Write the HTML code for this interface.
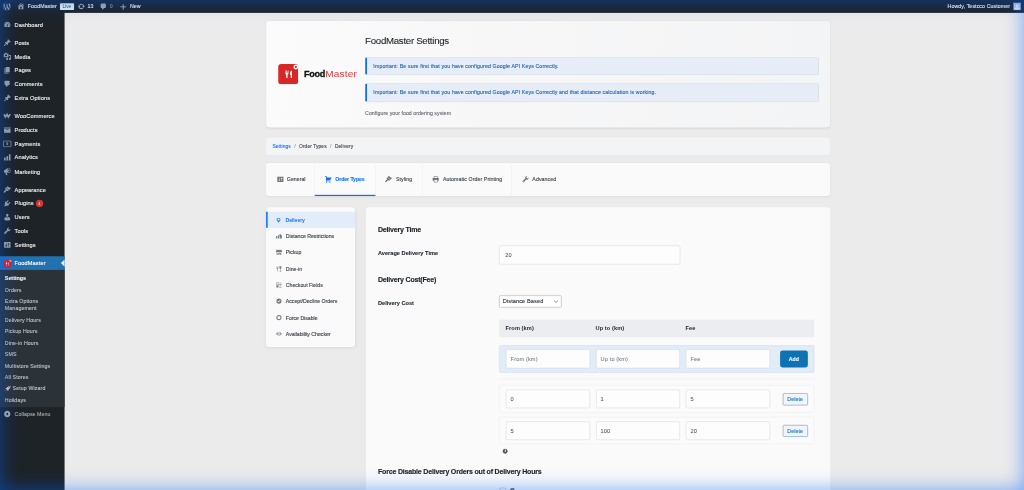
<!DOCTYPE html>
<html lang="en">
<head>
<meta charset="utf-8">
<title>FoodMaster Settings</title>
<style>
*{box-sizing:border-box;margin:0;padding:0}
html,body{width:1024px;height:490px;overflow:hidden;background:#ebebeb}
body{font-family:"Liberation Sans",sans-serif;font-size:13px;line-height:1.4;color:#3c434a;-webkit-text-stroke:.25px}
#vp{position:relative;width:1024px;height:490px;overflow:hidden}
#page{position:absolute;left:0;top:0;width:2544px;height:1218px;transform:scale(0.40252);transform-origin:0 0;background:#ebebeb}
#ss{position:absolute;left:0;top:0;width:1024px;height:490px;overflow:hidden;transform:rotate(0.0001deg);transform-origin:0 0}
#glow{position:absolute;left:0;top:0;width:1024px;height:490px;pointer-events:none;box-shadow:inset 0 0 19px 0 rgba(0,98,255,.53)}
svg{display:block}

/* admin bar */
#bar{-webkit-text-stroke:.3px;z-index:2;position:absolute;left:0;top:0;width:2544px;height:32px;background:#1d2327;color:#f0f0f1;font-size:13px;line-height:32px;white-space:nowrap}
#bar .it{position:absolute;top:0;height:32px}
#bar svg{position:absolute;fill:#a7aaad}
#bar .live{position:absolute;left:148.5px;top:7.5px;width:35px;height:17.5px;background:#e4eff3;color:#1c5a2c;-webkit-text-stroke:0;font-size:12px;line-height:17.5px;text-align:center;border-radius:2px}
#bar .av{position:absolute;left:2518px;top:7px;width:18px;height:18px;background:#c6d2dd;border:1px solid #8c8f94;overflow:hidden}

/* admin menu */
#menu{position:absolute;left:0;top:0;width:160px;height:1218px;background:#1d2327;padding-top:43.700px;transform:scale(1.0025);transform-origin:0 0}
#menu .m{-webkit-text-stroke:.3px;position:relative;height:34.2px;color:#f0f0f1;font-size:14px;line-height:18.2px;padding:8px 8px 8px 36px;white-space:nowrap;letter-spacing:.25px}
#menu .m svg{position:absolute;left:8px;top:7px;width:20px;height:20px;fill:#9ea3a8}
#menu .sep{height:5px;margin-bottom:6px}
#menu .cur{background:#2271b1;color:#fff}
#menu .cur:after{content:"";position:absolute;right:0;top:8.1px;border:9px solid transparent;border-right-color:#ebebeb}
#menu .sub{background:#2c3338;padding:7px 0 4.500px}
#menu .sub div{font-size:13px;line-height:18.2px;padding:6px 12px 4px;color:#c3c4c7;letter-spacing:.3px}
#menu .sub .on{color:#fff;font-weight:700;letter-spacing:.1px}
#menu .badge{display:inline-block;vertical-align:top;margin:.5px 0 0 1px;min-width:18px;height:18px;border-radius:9px;background:#d63638;color:#fff;font-size:10px;line-height:18px;-webkit-text-stroke:0;text-align:center;letter-spacing:0}
#menu .col{position:relative;height:34px;font-size:13px;line-height:35px;color:#a7aaad;padding-left:36px;letter-spacing:.2px}
#menu .col svg{position:absolute;left:8px;top:7px;width:20px;height:20px;fill:#a7aaad}

/* main */
.card{position:absolute;background:#fafafa;border-radius:8px;box-shadow:-1.500px 0 0 0 #fafafa,0 2px 6px rgba(30,50,80,.06)}
#hdr{left:662px;top:52px;width:1400px;height:263.500px;box-shadow:-1.500px 0 0 0 #fbfbfb,0 2px 6px rgba(0,0,0,.07);background:linear-gradient(100deg,#fbfbfb 0%,#f7f7f8 40%,#f3f4f5 100%)}
#hdr .logo{position:absolute;left:28.500px;top:106.500px;width:50px;height:50px}
#hdr .lt{position:absolute;left:93px;top:118px;font-size:21px;line-height:30px;white-space:nowrap;color:#111}
#hdr .lt b{font-weight:700;letter-spacing:-.7px;font-size:22.500px;-webkit-text-stroke:.8px}
#hdr .lt span{color:#e0383a;letter-spacing:.35px;margin-left:1px;-webkit-text-stroke:0;display:inline-block;transform:scaleX(1.19);transform-origin:0 50%}
#hdr h1{position:absolute;left:245px;top:34px;font-size:24px;font-weight:400;line-height:30px;color:#1d2327;white-space:nowrap;letter-spacing:-.7px}
.note{position:absolute;left:245px;width:1127px;height:44px;background:#e6edf6;border:1px solid #c0ccdb;border-left:5px solid #0d6efd;border-radius:4px;color:#2068b8;font-size:13px;line-height:42px;padding-left:15.500px;white-space:nowrap;font-weight:400;letter-spacing:.3px;box-shadow:0 1px 1.500px rgba(0,0,0,.05);-webkit-text-stroke:.3px}
#hdr .desc{position:absolute;left:245px;top:219.500px;font-size:13px;line-height:20px;color:#646970;white-space:nowrap;letter-spacing:.1px}
#bc{left:662px;top:342px;width:1400px;height:43px;background:#f3f4f6;font-size:12px;line-height:43px;color:#3c434a;white-space:nowrap;padding-left:15px;letter-spacing:.25px;box-shadow:-1.500px 0 0 0 #f3f4f6}
#bc a{color:#0d6efd}
#bc i{font-style:normal;color:#8c8f94;margin:0 8.500px 0 8.500px}
#tabs{left:662px;top:405px;width:1400px;height:82px;white-space:nowrap;-webkit-text-stroke:.3px}
#tabs .t{position:absolute;top:0;height:82px;border-right:1px solid #ececee;font-size:13px;line-height:82px;color:#3c434a;letter-spacing:.2px}
#tabs .t svg{position:absolute;top:31px;width:19px;height:19px;fill:#6b7178;margin-left:-1.500px}
#tabs .t span{position:absolute;top:-1px}
#tabs .act{color:#1277fb;font-weight:700;letter-spacing:-.25px;-webkit-text-stroke:.3px;border-bottom:3.600px solid #0d6efd}
#tabs .act svg{fill:#0d6efd}
#side{left:660.500px;top:514.500px;width:221.500px;box-shadow:0 2px 8px rgba(30,50,80,.08);height:347px;padding-top:11px;overflow:hidden;-webkit-text-stroke:.3px}
#side .s{position:relative;height:40.400px;font-size:13px;line-height:43.500px;color:#3c434a;padding-left:49.500px;white-space:nowrap;letter-spacing:-.1px}
#side .s svg{position:absolute;left:24px;top:13px;width:16px;height:16px;fill:#777c83}
#side .on{background:#e3edf9;color:#1a78fb;font-weight:700;letter-spacing:-.35px;-webkit-text-stroke:0;border-left:4.500px solid #0d6efd;padding-left:45px}
#side .on svg{left:20.500px;top:14px;width:14px;height:14px;fill:#2a80fb}
#form{left:908px;top:514.500px;width:1155px;height:720px;border-radius:8px 8px 0 0;box-shadow:none;clip-path:inset(0 0 0 1.300px round 8px 8px 0 0)}
#form h2{position:absolute;left:31px;font-size:17.500px;font-weight:700;line-height:24px;color:#1d2327;white-space:nowrap;letter-spacing:-.5px;-webkit-text-stroke:.35px}
#form .lb{position:absolute;left:31px;font-size:14px;font-weight:700;line-height:20px;color:#1d2327;white-space:nowrap;letter-spacing:0;-webkit-text-stroke:.2px}
.inp{position:absolute;height:47px;background:#fdfdfd;border:1px solid #c9cdd2;border-radius:4px;font-size:14px;line-height:45px;padding-left:10.500px;color:#4a5158;white-space:nowrap;letter-spacing:.3px;-webkit-text-stroke:.1px}
.inp.ph{color:#72777c}
#form .sel{position:absolute;left:332px;top:219.500px;width:155px;height:30px;background:#fff;border:1px solid #8c8f94;border-radius:3px;font-size:14px;line-height:25.500px;padding-left:8px;color:#2c3338;letter-spacing:.2px}
#form .sel svg{position:absolute;right:5px;top:6px;width:16px;height:16px}
#thead{position:absolute;left:332px;top:279px;width:783px;height:44px;background:#ebedf0;border-radius:3px;font-size:14px;font-weight:700;line-height:44px;color:#1d2327;-webkit-text-stroke:0}
#thead span{position:absolute;top:0;letter-spacing:.2px}
#addrow{position:absolute;left:332px;top:343.500px;width:783px;height:67.500px;background:#e2ecf7;border:1px solid #c3d6ec;border-radius:4px}
.row{position:absolute;left:332px;width:783px;height:67.500px;background:#fbfbfb;border:1px solid #e6e8eb;border-radius:4px}
.btnp{position:absolute;left:697px;top:12px;width:68.500px;height:42px;background:#0f72b4;border-radius:6px;color:#fff;font-size:13px;font-weight:700;line-height:42px;text-align:center}
.btnd{position:absolute;left:703.500px;top:19px;width:62px;height:29.500px;background:#f1f5f9;border:1px solid #2271b1;border-radius:3px;color:#2271b1;font-size:13px;line-height:27.500px;text-align:center;letter-spacing:.2px}
#form .hr{position:absolute;left:332px;top:426px;width:783px;height:1px;background:#e3e5e8}
.info{position:absolute;width:12px;height:12px;border-radius:50%;background:#50575e;color:#fff;font-size:9px;font-weight:700;line-height:12px;text-align:center;font-family:"Liberation Serif",serif}
</style>
</head>
<body>
<div id="vp">
<div id="ss">
<div id="page">

<div id="bar">
  <svg style="left:7px;top:6px;fill:#a0a6ad" width="20" height="20" viewBox="0 0 20 20"><path d="M20 10c0-5.51-4.49-10-10-10C4.48 0 0 4.49 0 10c0 5.52 4.48 10 10 10 5.51 0 10-4.48 10-10zM7.78 15.37L4.37 6.22c.55-.02 1.17-.08 1.17-.08.5-.06.44-1.13-.06-1.11 0 0-1.45.11-2.37.11-.18 0-.37 0-.58-.01C4.12 2.69 6.87 1.11 10 1.11c2.33 0 4.45.87 6.05 2.34-.68-.11-1.65.39-1.65 1.58 0 .74.45 1.36.9 2.1.35.61.55 1.36.55 2.46 0 1.49-1.4 5-1.4 5l-3.03-8.37c.54-.02.82-.17.82-.17.5-.05.44-1.25-.06-1.22 0 0-1.44.12-2.38.12-.87 0-2.33-.12-2.33-.12-.5-.03-.56 1.2-.06 1.22l.92.08 1.26 3.41zM17.41 10c.24-.64.74-1.87.43-4.25.7 1.29 1.05 2.71 1.05 4.25 0 3.29-1.73 6.24-4.4 7.78.97-2.59 1.94-5.2 2.92-7.78zM6.1 18.09C3.12 16.65 1.11 13.53 1.11 10c0-1.3.23-2.48.72-3.59C3.25 10.3 4.67 14.2 6.1 18.09zm4.03-6.63l2.58 6.98c-.86.29-1.76.45-2.71.45-.79 0-1.57-.11-2.29-.33.81-2.38 1.62-4.74 2.42-7.1z"/></svg>
  <svg style="left:42px;top:5px" width="20" height="20" viewBox="0 0 20 20"><path d="M16 8.5l1.53 1.53-1.06 1.06L10 4.62l-6.47 6.47-1.06-1.06L10 2.5l4 4v-2h2v4zm-6-2.46l6 5.99V18H4v-5.97zM12 17v-5H8v5h4z"/></svg>
  <span class="it" style="left:69px;letter-spacing:.3px">FoodMaster</span>
  <span class="live">Live</span>
  <svg style="left:191.5px;top:6px" width="20" height="20" viewBox="0 0 20 20"><path d="M10.2 3.28c3.53 0 6.43 2.61 6.92 6h2.08l-3.5 4-3.5-4h2.32c-.45-1.97-2.21-3.45-4.32-3.45-1.45 0-2.73.71-3.54 1.78L4.95 5.66C6.23 4.2 8.11 3.28 10.2 3.28zm-.4 13.44c-3.52 0-6.43-2.61-6.92-6H.8l3.5-4c1.17 1.33 2.33 2.67 3.5 4H5.48c.45 1.97 2.21 3.45 4.32 3.45 1.45 0 2.73-.71 3.54-1.78l1.71 1.95c-1.28 1.46-3.15 2.38-5.25 2.38z"/></svg>
  <span class="it" style="left:217.5px">13</span>
  <svg style="left:246.5px;top:7px" width="20" height="20" viewBox="0 0 20 20"><path d="M5 2h9c1.1 0 2 .9 2 2v7c0 1.1-.9 2-2 2h-2l-5 5v-5H5c-1.1 0-2-.9-2-2V4c0-1.1.9-2 2-2z"/></svg>
  <span class="it" style="left:272.5px;color:#8c9096">0</span>
  <svg style="left:296px;top:6.5px;fill:#c3c4c7" width="20" height="20" viewBox="0 0 20 20"><path d="M17 9v2h-6v6H9v-6H3V9h6V3h2v6h6z"/></svg>
  <span class="it" style="left:323px">New</span>
  <span class="it" style="left:2354px;letter-spacing:.25px">Howdy, Testcco Customer</span>
  <span class="av"><svg style="left:0;top:0;fill:#f3f6f9" width="16" height="16" viewBox="0 0 16 16"><circle cx="8" cy="6" r="3.2"/><path d="M1.5 16c0-4 3-6 6.500-6s6.500 2 6.500 6z"/></svg></span>
</div>

<div id="menu">
  <div class="m"><svg viewBox="0 0 20 20"><path d="M3.76 16h12.480c1.100-1.370 1.760-3.110 1.760-5 0-4.420-3.580-8-8-8s-8 3.580-8 8c0 1.890.66 3.630 1.760 5zM10 4c.55 0 1 .45 1 1s-.45 1-1 1-1-.45-1-1 .45-1 1-1zM6 6c.55 0 1 .45 1 1s-.45 1-1 1-1-.45-1-1 .45-1 1-1zm8 0c.55 0 1 .45 1 1s-.45 1-1 1-1-.45-1-1 .45-1 1-1zm-5.370 5.550L12 7v6c0 1.100-.9 2-2 2s-2-.9-2-2c0-.57.24-1.080.63-1.450zM4 10c.55 0 1 .45 1 1s-.45 1-1 1-1-.45-1-1 .45-1 1-1zm12 0c.55 0 1 .45 1 1s-.45 1-1 1-1-.45-1-1 .45-1 1-1zm-5 3c0-.55-.45-1-1-1s-1 .45-1 1 .45 1 1 1 1-.45 1-1z"/></svg>Dashboard</div>
  <div class="sep"></div>
  <div class="m"><svg viewBox="0 0 20 20"><path d="M10.440 3.020l1.820-1.820 6.360 6.350-1.830 1.820c-1.050-.68-2.480-.57-3.410.36l-.75.75c-.92.93-1.040 2.350-.35 3.410l-1.830 1.820-2.410-2.410-2.800 2.790c-.42.42-3.380 2.710-3.800 2.290s1.860-3.390 2.280-3.810l2.790-2.790L4.100 9.360l1.830-1.820c1.050.69 2.480.57 3.400-.36l.75-.75c.93-.92 1.050-2.350.36-3.410z"/></svg>Posts</div>
  <div class="m"><svg viewBox="0 0 20 20"><path d="M13 11V4c0-.55-.45-1-1-1h-1.670L9 1H5L3.670 3H2c-.55 0-1 .45-1 1v7c0 .55.45 1 1 1h10c.55 0 1-.45 1-1zM7 4.500c1.380 0 2.500 1.120 2.500 2.500S8.380 9.500 7 9.500 4.500 8.380 4.500 7 5.620 4.500 7 4.500zM14 6h5v10.500c0 1.380-1.120 2.500-2.500 2.500S14 17.880 14 16.500s1.120-2.500 2.500-2.500c.17 0 .34.02.5.05V9h-3V6zm-4 8.050V13h2v3.500c0 1.380-1.120 2.500-2.500 2.500S7 17.880 7 16.500 8.120 14 9.500 14c.17 0 .34.02.5.05z"/></svg>Media</div>
  <div class="m"><svg viewBox="0 0 20 20"><path d="M6 15V2h10v13H6zm-1 1h8v2H3V5h2v11z"/></svg>Pages</div>
  <div class="m"><svg viewBox="0 0 20 20"><path d="M5 2h9c1.100 0 2 .9 2 2v7c0 1.100-.9 2-2 2h-2l-5 5v-5H5c-1.100 0-2-.9-2-2V4c0-1.100.9-2 2-2z"/></svg>Comments</div>
  <div class="m"><svg viewBox="0 0 20 20"><path d="M10.440 3.020l1.820-1.820 6.360 6.350-1.830 1.820c-1.050-.68-2.480-.57-3.410.36l-.75.75c-.92.93-1.040 2.350-.35 3.410l-1.830 1.820-2.410-2.410-2.800 2.790c-.42.42-3.380 2.710-3.800 2.290s1.860-3.390 2.280-3.810l2.790-2.790L4.100 9.360l1.830-1.820c1.050.69 2.480.57 3.400-.36l.75-.75c.93-.92 1.050-2.350.36-3.410z"/></svg>Extra Options</div>
  <div class="sep"></div>
  <div class="m"><svg viewBox="0 0 20 20"><path d="M1.800 5L5.200 12.300l4.200-6.800 3.200 6.800 4.800-7.300" fill="none" stroke="#9ea3a8" stroke-width="3.800" stroke-linejoin="miter"/></svg>WooCommerce</div>
  <div class="m"><svg viewBox="0 0 20 20"><path d="M19 4v2H1V4h18zM2 7h16v10H2V7zm11 3V9H7v1h6z"/></svg>Products</div>
  <div class="m"><svg viewBox="0 0 20 16" style="left:7px;top:8.500px;width:21.500px;height:17.200px"><rect x="1" y="1" width="18" height="14" rx="1.800" fill="none" stroke="#9ea3a8" stroke-width="2"/><path d="M9.400 3h1.200v1c1 .15 1.700.8 1.800 1.700h-1.300c-.1-.4-.5-.65-1.100-.65-.6 0-1 .25-1 .65 0 .35.3.55 1.100.7l.7.150c1.300.28 1.900.8 1.900 1.750 0 1-.75 1.650-2 1.800V11H9.400v-.9c-1.200-.15-1.950-.8-2-1.800h1.300c.1.450.55.7 1.250.7s1.100-.28 1.100-.68c0-.35-.28-.55-1.050-.7l-.75-.15C8.100 7.200 7.500 6.650 7.500 5.750c0-.95.75-1.600 1.900-1.750V3z"/></svg>Payments</div>
  <div class="m"><svg viewBox="0 0 20 20"><path d="M18 18V2h-4v16h4zm-6 0V7H8v11h4zm-6 0v-8H2v8h4z"/></svg>Analytics</div>
  <div class="m"><svg viewBox="0 0 20 20"><path d="M18.150 5.940c.46 1.620.38 3.220-.02 4.480-.42 1.280-1.260 2.180-2.300 2.480-.16.06-.26.06-.4.06-.06.02-.12.02-.18.02-.06.02-.14.02-.22.02h-6.800l2.220 5.500c.02.14-.06.26-.14.34-.08.1-.24.16-.34.16H6.950c-.1 0-.26-.06-.34-.16-.08-.08-.16-.2-.14-.34l-1-5.500H4.250l-.02-.02c-.5.06-1.080-.18-1.540-.62s-.88-1.080-1.060-1.880c-.24-.8-.2-1.560-.02-2.200.18-.62.58-1.080 1.060-1.300l.02-.02 9-5.400c.1-.06.18-.1.24-.16.06-.04.14-.08.24-.12.16-.08.28-.12.5-.18 1.040-.3 2.240.1 3.220.98s1.840 2.240 2.260 3.860zm-2.580 5.980h-.02c.4-.1.74-.34 1.040-.7.58-.7.86-1.760.86-3.040 0-.64-.1-1.300-.28-1.980-.34-1.360-1.020-2.500-1.780-3.240s-1.680-1.100-2.460-.88c-.82.22-1.400.96-1.700 2-.32 1.040-.28 2.360.06 3.720.38 1.360 1 2.500 1.800 3.240.78.74 1.620 1.100 2.480.88zm-2.540-7.080c.22-.04.42-.02.62.04.38.16.76.48 1.020 1s.42 1.200.42 1.780c0 .3-.04.56-.12.8-.18.48-.44.84-.86.940-.34.1-.8-.06-1.140-.4s-.64-.86-.78-1.500c-.18-.62-.12-1.240.02-1.720s.48-.84.82-.940z"/></svg>Marketing</div>
  <div class="sep"></div>
  <div class="m"><svg viewBox="0 0 20 20"><path d="M14.480 11.060L7.410 3.990l1.500-1.500c.5-.56 2.300-.47 3.510.32 1.210.8 1.430 1.280 2.910 2.100 1.180.64 2.450 1.260 4.450.85zm-.71.71L6.700 4.700 4.930 6.470c-.39.39-.39 1.020 0 1.410l1.060 1.060c.39.39.39 1.030 0 1.420-.6.6-1.430 1.110-2.210 1.690-.35.26-.7.53-1.010.84C1.430 14.230.4 16.080 1.400 17.070c.99 1 2.840-.03 4.180-1.360.31-.31.58-.66.85-1.020.57-.78 1.080-1.610 1.690-2.210.39-.39 1.020-.39 1.410 0l1.060 1.060c.39.39 1.020.39 1.410 0z"/></svg>Appearance</div>
  <div class="m"><svg viewBox="0 0 20 20"><path d="M13.110 4.360L9.870 7.600 8 5.730l3.240-3.240c.35-.34 1.050-.2 1.560.32.52.51.66 1.210.31 1.550zm-8 1.770l.91-1.120 9.010 9.010-1.190.84c-.71.71-2.630 1.160-3.820 1.160H6.140L4.900 17.260c-.59.59-1.540.59-2.120 0-.59-.58-.59-1.530 0-2.120l1.240-1.240v-3.880c0-1.130.4-3.190 1.090-3.890zm7.260 3.970l3.240-3.240c.34-.35 1.040-.21 1.550.31.52.51.66 1.210.31 1.550l-3.240 3.250z"/></svg>Plugins <span class="badge">4</span></div>
  <div class="m"><svg viewBox="0 0 20 20"><path d="M10 9.250c-2.270 0-2.730-3.440-2.730-3.440C7 4.020 7.820 2 9.970 2c2.160 0 2.980 2.020 2.710 3.810 0 0-.41 3.440-2.680 3.440zm0 2.570L12.720 10c2.390 0 4.520 2.330 4.520 4.530v2.490s-3.650 1.130-7.240 1.130c-3.650 0-7.240-1.130-7.240-1.130v-2.490c0-2.250 1.940-4.480 4.470-4.480z"/></svg>Users</div>
  <div class="m"><svg viewBox="0 0 20 20"><path d="M16.680 9.770c-1.340 1.340-3.300 1.670-4.950.99l-5.410 6.520c-.99.99-2.590.99-3.580 0s-.99-2.590 0-3.570l6.520-5.420c-.68-1.650-.35-3.610.99-4.950 1.280-1.280 3.120-1.620 4.720-1.060l-2.890 2.890 2.820 2.820 2.860-2.870c.53 1.580.18 3.390-1.080 4.650zM3.810 16.210c.4.39 1.040.39 1.430 0 .4-.4.4-1.040 0-1.430-.39-.4-1.030-.4-1.430 0-.39.39-.39 1.030 0 1.430z"/></svg>Tools</div>
  <div class="m"><svg viewBox="0 0 20 20"><path d="M18 16V4c0-.55-.45-1-1-1H3c-.55 0-1 .45-1 1v12c0 .55.45 1 1 1h14c.55 0 1-.45 1-1zM8 11h1c.55 0 1 .45 1 1s-.45 1-1 1H8v1.500c0 .28-.22.5-.5.5s-.5-.22-.5-.5V13H6c-.55 0-1-.45-1-1s.45-1 1-1h1V5.500c0-.28.22-.5.5-.5s.5.22.5.5V11zm5-2h-1c-.55 0-1-.45-1-1s.45-1 1-1h1V5.500c0-.28.22-.5.5-.5s.5.22.5.5V7h1c.55 0 1 .45 1 1s-.45 1-1 1h-1v5.500c0 .28-.22.5-.5.5s-.5-.22-.5-.5V9z"/></svg>Settings</div>
  <div class="sep"></div>
  <div class="m cur"><svg viewBox="0 0 20 20" style="left:7.500px;top:7.500px;width:22px;height:22px"><rect x="0" y="2" width="18" height="18" rx="3" fill="#d0262d"/><circle cx="16.200" cy="3.800" r="2.200" fill="#f4d5d6"/><circle cx="16.200" cy="3.800" r="1" fill="#d0262d"/><path fill="#fff" d="M6 7h.9v2.500h.7V7h.9v3.200c0 .6-.4 1-.8 1.100V15H6.800v-3.700c-.5-.1-.8-.5-.8-1.100V7zm6 0c-1 .4-1.700 1.700-1.700 3.200 0 .8.3 1.300.8 1.500V15H12V7z"/></svg>FoodMaster</div>
  <div class="sub">
    <div class="on">Settings</div>
    <div>Orders</div>
    <div>Extra Options<br>Management</div>
    <div>Delivery Hours</div>
    <div>Pickup Hours</div>
    <div>Dine-in Hours</div>
    <div>SMS</div>
    <div>Multistore Settings</div>
    <div>All Stores</div>
    <div><svg style="display:inline-block;vertical-align:-3px;margin-right:4px" width="15" height="15" viewBox="0 0 16 16"><path d="M15 1c-4 0-7.500 2-9.500 5.500L3 7 1.500 9.500l3 .5 2 2 .5 3L9.500 13.500l.5-2.500C13.500 9 15 5.500 15 1z" fill="#c9ced6"/><path d="M15 1c-2 0-3.500.5-4.800 1.300l3.500 3.500C14.500 4.500 15 3 15 1zM1 15l1.200-3.500 2.300 2.300z" fill="#e0453f"/><circle cx="10.500" cy="5.500" r="1.400" fill="#3f6fb0"/></svg>Setup Wizard</div>
    <div>Holidays</div>
  </div>
  <div class="col"><svg viewBox="0 0 20 20"><path d="M10 2.160c4.330 0 7.840 3.510 7.840 7.840s-3.510 7.840-7.840 7.840S2.160 14.330 2.160 10 5.670 2.160 10 2.160zm2 11.720V6.120L6.180 9.970z"/></svg>Collapse Menu</div>
</div>

<div id="main">

<div class="card" id="hdr">
  <svg class="logo" viewBox="0 0 50 50"><rect width="50" height="50" rx="8" fill="#d92626"/><circle cx="44" cy="7.500" r="6" fill="#fff"/><circle cx="44" cy="7.500" r="2.800" fill="#d92626"/><path fill="#fff" d="M17 16h1.800v6h1.600v-6h1.800v6h1.600v-6h1.800v7.500c0 1.500-1 2.700-2.300 3V35h-3.200v-8.500c-1.300-.3-2.300-1.500-2.300-3V16h1.200zM33.500 16c-2.500 1-4.200 4.200-4.200 8 0 1.900.8 3.200 2 3.700V35h3.200V16h-1z"/></svg>
  <div class="lt"><b>Food</b><span>Master</span></div>
  <h1>FoodMaster Settings</h1>
  <div class="note" style="top:90px">Important: Be sure first that you have configured Google API Keys Correctly.</div>
  <div class="note" style="top:154.500px;height:46px;line-height:44px">Important: Be sure first that you have configured Google API Keys Correctly and that distance calculation is working.</div>
  <div class="desc">Configure your food ordering system</div>
</div>

<div class="card" id="bc"><a>Settings</a><i>/</i>Order Types<i>/</i>Delivery</div>

<div class="card" id="tabs">
  <div class="t" style="left:0;width:119.500px"><svg style="left:26px" viewBox="0 0 20 20"><path d="M18 16V4c0-.55-.45-1-1-1H3c-.55 0-1 .45-1 1v12c0 .55.45 1 1 1h14c.55 0 1-.45 1-1zM8 11h1c.55 0 1 .45 1 1s-.45 1-1 1H8v1.500c0 .28-.22.5-.5.5s-.5-.22-.5-.5V13H6c-.55 0-1-.45-1-1s.45-1 1-1h1V5.500c0-.28.22-.5.5-.5s.5.22.5.5V11zm5-2h-1c-.55 0-1-.45-1-1s.45-1 1-1h1V5.500c0-.28.22-.5.5-.5s.5.22.5.5V7h1c.55 0 1 .45 1 1s-.45 1-1 1h-1v5.500c0 .28-.22.5-.5.5s-.5-.22-.5-.5V9z"/></svg><span style="left:50.500px;letter-spacing:.05px">General</span></div>
  <div class="t act" style="left:119.500px;width:151.500px"><svg style="left:26px" viewBox="0 0 20 20"><path d="M6 13h9c.55 0 1 .45 1 1s-.45 1-1 1H5c-.55 0-1-.45-1-1V4H2c-.55 0-1-.45-1-1s.45-1 1-1h3c.55 0 1 .45 1 1v2h13l-4 7H6v1zm-.5 3c.83 0 1.500.67 1.500 1.500S6.330 19 5.500 19 4 18.330 4 17.500 4.670 16 5.500 16zm9 0c.83 0 1.500.67 1.500 1.500s-.67 1.500-1.500 1.500-1.500-.67-1.500-1.500.67-1.500 1.500-1.500z"/></svg><span style="left:51.500px">Order Types</span></div>
  <div class="t" style="left:271px;width:117px"><svg style="left:24px" viewBox="0 0 20 20"><path d="M14.480 11.060L7.410 3.990l1.500-1.500c.5-.56 2.300-.47 3.510.32 1.210.8 1.430 1.280 2.910 2.100 1.180.64 2.450 1.260 4.450.85zm-.71.71L6.700 4.700 4.930 6.470c-.39.39-.39 1.020 0 1.410l1.060 1.060c.39.39.39 1.030 0 1.420-.6.6-1.430 1.110-2.210 1.690-.35.26-.7.53-1.010.84C1.430 14.230.4 16.080 1.400 17.070c.99 1 2.840-.03 4.180-1.360.31-.31.58-.66.85-1.020.57-.78 1.080-1.610 1.690-2.210.39-.39 1.020-.39 1.410 0l1.060 1.060c.39.39 1.020.39 1.410 0z"/></svg><span style="left:50.500px">Styling</span></div>
  <div class="t" style="left:388px;width:221.500px"><svg style="left:24.500px" viewBox="0 0 20 20"><rect x="5.700" y="2.700" width="8.600" height="4.500" fill="#fafafa" stroke="#6b7178" stroke-width="1.400"/><rect x="2" y="6.500" width="16" height="7.500" rx="1.500"/><rect x="5.700" y="11.200" width="8.600" height="6" fill="#fafafa" stroke="#6b7178" stroke-width="1.400"/></svg><span style="left:50.500px">Automatic Order Printing</span></div>
  <div class="t" style="left:609.500px;width:140px;border-right:0"><svg style="left:26px" viewBox="0 0 20 20"><path d="M16.680 9.770c-1.340 1.340-3.300 1.670-4.950.99l-5.410 6.520c-.99.99-2.590.99-3.580 0s-.99-2.590 0-3.570l6.520-5.420c-.68-1.650-.35-3.610.99-4.950 1.280-1.280 3.120-1.620 4.720-1.060l-2.890 2.890 2.820 2.820 2.860-2.870c.53 1.580.18 3.390-1.080 4.650zM3.810 16.210c.4.39 1.040.39 1.430 0 .4-.4.4-1.040 0-1.430-.39-.4-1.030-.4-1.430 0-.39.39-.39 1.030 0 1.430z"/></svg><span style="left:51px">Advanced</span></div>
</div>

<div class="card" id="side">
  <div class="s on"><svg viewBox="0 0 20 20"><path fill-rule="evenodd" d="M10 1c4 0 6.800 2.900 6.800 6.500 0 4.200-5 8.400-6.800 11.500-1.800-3.100-6.800-7.300-6.800-11.500C3.200 3.900 6 1 10 1zm0 2.700a3.800 3.800 0 100 7.600 3.800 3.800 0 000-7.600z"/></svg>Delivery</div>
  <div class="s"><svg viewBox="0 0 20 20"><path d="M1 9h4v8H1zM7 6h3v11H7zM12 3h3l1 3 3 1v8a2 2 0 01-2 2h-5z"/></svg>Distance Restrictions</div>
  <div class="s"><svg viewBox="0 0 20 20"><path d="M2 2h16l1.500 6c0 1.400-1 2.500-2.400 2.500S14.700 9.400 14.700 8c0 1.400-1 2.500-2.400 2.500S10 9.400 10 8c0 1.400-1 2.500-2.300 2.500S5.300 9.400 5.300 8c0 1.400-1 2.500-2.400 2.500S.5 9.400.5 8zM3 12h3v6H3zm5 0h9v6h-3v-4h-3v4H8z"/></svg>Pickup</div>
  <div class="s"><svg viewBox="0 0 20 20"><path d="M3 2h1v5h1V2h1v5h1V2h1v6c0 1-.8 1.800-1.700 2V18H4.700v-8C3.800 9.800 3 9 3 8zm8 0h7l-1 6c-.2 1.200-1 2-2 2.200V16h2v2h-5v-2h2v-5.800c-1-.2-1.800-1-2-2.200z"/></svg>Dine-in</div>
  <div class="s"><svg viewBox="0 0 20 20"><path d="M2 2h7v7H2zm1.500 1.500v4h4v-4zM11 3h7v2h-7zm0 4h7v2h-7zM2 11h7v7H2zm9 1h7v2h-7zm0 4h7v2h-7z"/></svg>Checkout Fields</div>
  <div class="s"><svg viewBox="0 0 20 20"><path fill-rule="evenodd" d="M10 2a8 8 0 110 16 8 8 0 010-16zm-1.200 11.800l6-6-1.500-1.500-4.500 4.500-2-2-1.500 1.500z"/></svg>Accept/Decline Orders</div>
  <div class="s"><svg viewBox="0 0 20 20"><path fill-rule="evenodd" d="M10 2a8 8 0 110 16 8 8 0 010-16zm0 3.200a4.800 4.800 0 100 9.600 4.800 4.800 0 000-9.600z"/></svg>Force Disable</div>
  <div class="s"><svg viewBox="0 0 20 20" style="fill:#9a9ea4"><path fill-rule="evenodd" d="M10 4.500c4.200 0 7.600 2.400 9.500 5.500-1.900 3.100-5.300 5.500-9.500 5.500S2.400 13.100.5 10C2.400 6.900 5.800 4.500 10 4.500zm0 2a3.500 3.500 0 100 7 3.500 3.500 0 000-7zm0 1.700a1.800 1.800 0 110 3.600 1.800 1.800 0 010-3.600z"/></svg>Availability Checker</div>
</div>

<div class="card" id="form">
  <h2 style="top:44px">Delivery Time</h2>
  <div class="lb" style="top:103.500px">Average Delivery Time</div>
  <div class="inp" style="left:332px;top:95px;width:450px;padding-left:14px">20</div>
  <h2 style="top:168px">Delivery Cost(Fee)</h2>
  <div class="lb" style="top:228px">Delivery Cost</div>
  <div class="sel">Distance Based<svg viewBox="0 0 20 20"><path d="M3.500 7l6.500 6 6.500-6" fill="none" stroke="#50575e" stroke-width="2"/></svg></div>
  <div id="thead"><span style="left:16px">From (km)</span><span style="left:239.500px">Up to (km)</span><span style="left:463px">Fee</span></div>
  <div id="addrow">
    <div class="inp ph" style="left:16px;top:9px;width:208.500px">From (km)</div>
    <div class="inp ph" style="left:239.500px;top:9px;width:208.500px">Up to (km)</div>
    <div class="inp ph" style="left:463px;top:9px;width:208.500px">Fee</div>
    <div class="btnp">Add</div>
  </div>
  <div class="hr"></div>
  <div class="row" style="top:442.500px">
    <div class="inp" style="left:16px;top:10px;width:208.500px;height:46px">0</div>
    <div class="inp" style="left:239.500px;top:10px;width:208.500px;height:46px">1</div>
    <div class="inp" style="left:463px;top:10px;width:208.500px;height:46px">5</div>
    <div class="btnd">Delete</div>
  </div>
  <div class="row" style="top:521px">
    <div class="inp" style="left:16px;top:10px;width:208.500px;height:46px">5</div>
    <div class="inp" style="left:239.500px;top:10px;width:208.500px;height:46px">100</div>
    <div class="inp" style="left:463px;top:10px;width:208.500px;height:46px">20</div>
    <div class="btnd">Delete</div>
  </div>
  <div class="info" style="left:341px;top:600.500px">i</div>
  <h2 style="top:644.500px">Force Disable Delivery Orders out of Delivery Hours</h2>
  <div style="position:absolute;left:333px;top:697px;width:16px;height:16px;border:1px solid #8c8f94;border-radius:4px;background:#fff"></div>
  <div class="info" style="left:359px;top:698px">i</div>
</div>

</div>

</div>
</div>
<div id="glow"></div>
</div>
</body>
</html>
